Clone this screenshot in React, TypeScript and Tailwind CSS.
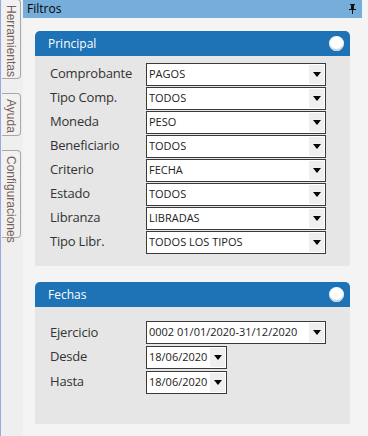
import React from 'react';

type FieldProps = {
  label: string;
  value: string;
  width?: string;
};

const principal: FieldProps[] = [
  { label: 'Comprobante', value: 'PAGOS' },
  { label: 'Tipo Comp.', value: 'TODOS' },
  { label: 'Moneda', value: 'PESO' },
  { label: 'Beneficiario', value: 'TODOS' },
  { label: 'Criterio', value: 'FECHA' },
  { label: 'Estado', value: 'TODOS' },
  { label: 'Libranza', value: 'LIBRADAS' },
  { label: 'Tipo Libr.', value: 'TODOS LOS TIPOS' },
];

function SelectBox({ value, width = 'w-[180px]' }: { value: string; width?: string }) {
  return (
    <div className={`flex h-[23px] ${width} items-stretch border border-[#3a3a3a] bg-white`}>
      <span className="flex flex-1 items-center truncate pl-[2px] font-['Open_Sans',sans-serif] text-[11px] text-[#222]">
        {value}
      </span>
      <span className="m-[1px] flex w-[15px] items-center justify-center bg-[#efefef]">
        <span className="h-0 w-0 border-x-[4px] border-t-[5px] border-x-transparent border-t-black" />
      </span>
    </div>
  );
}

function Row({ label, value, width }: FieldProps) {
  return (
    <div className="flex h-[24px] items-center">
      <span className="w-[96px] font-['Open_Sans',sans-serif] text-[13px] tracking-[-0.2px] text-[#333]">{label}</span>
      <SelectBox value={value} width={width} />
    </div>
  );
}

function Toggle() {
  return (
    <span className="h-[15px] w-[15px] rounded-full bg-white shadow-[inset_0_-2px_1px_#c9d3dc]" />
  );
}

function Card({ title, children, bodyClass }: { title: string; children: React.ReactNode; bodyClass: string }) {
  return (
    <section className="flex flex-col">
      <header className="flex h-[25px] items-center justify-between rounded-t-[5px] bg-[#1d73b6] pl-[13px] pr-[6px]">
        <span className="font-['Open_Sans',sans-serif] text-[12px] text-white">{title}</span>
        <Toggle />
      </header>
      <div className={`bg-[#e6e6e6] pl-[15px] ${bodyClass}`}>{children}</div>
    </section>
  );
}

function SideTab({ label, height }: { label: string; height: string }) {
  return (
    <div
      className={`flex ${height} w-[19px] justify-center rounded-r-[4px] border border-l-0 border-[#a8a8a8] bg-[#f1f1f1] pt-[5px]`}
    >
      <span className="font-['Liberation_Sans',sans-serif] text-[12px] leading-none text-[#7a5e58] [writing-mode:vertical-rl]">
        {label}
      </span>
    </div>
  );
}

export default function App() {
  return (
    <div className="flex h-[436px] w-[368px] bg-[#f4f4f4]">
      <aside className="flex w-[23px] flex-col gap-[14px] border-l border-[#9aa9dc] bg-[#efefef] pl-[1px]">
        <div className="-mt-[1px]">
          <SideTab label="Herramientas" height="h-[80px]" />
        </div>
        <SideTab label="Ayuda" height="h-[43px]" />
        <SideTab label="Configuraciones" height="h-[88px]" />
      </aside>

      <main className="flex w-[339px] flex-col bg-[#f4f4f4]">
        <div className="flex h-[18px] items-center justify-between bg-[#76aedb] pl-[4px] pr-[6px]">
          <span className="font-['Open_Sans',sans-serif] text-[12px] text-black">Filtros</span>
          <svg width="7" height="10" viewBox="0 0 7 10">
            <path d="M1 0h5v1H5v4h2v1H4v4H3V6H0V5h2V1H1z" fill="#111" />
          </svg>
        </div>

        <div className="flex flex-col gap-[16px] px-[12px] pt-[13px]">
          <Card title="Principal" bodyClass="h-[210px] pt-[6px]">
            {principal.map((f) => (
              <Row key={f.label} {...f} />
            ))}
          </Card>

          <Card title="Fechas" bodyClass="h-[117px] pt-[14px]">
            <div className="flex h-[23px] items-center">
              <span className="w-[96px] font-['Open_Sans',sans-serif] text-[13px] tracking-[-0.2px] text-[#333]">Ejercicio</span>
              <SelectBox value="0002 01/01/2020-31/12/2020" />
            </div>
            <div className="mt-[1px] flex h-[24px] items-center">
              <span className="w-[96px] font-['Open_Sans',sans-serif] text-[13px] tracking-[-0.2px] text-[#333]">Desde</span>
              <SelectBox value="18/06/2020" width="w-[81px]" />
            </div>
            <div className="mt-[1px] flex h-[24px] items-center">
              <span className="w-[96px] font-['Open_Sans',sans-serif] text-[13px] tracking-[-0.2px] text-[#333]">Hasta</span>
              <SelectBox value="18/06/2020" width="w-[81px]" />
            </div>
          </Card>
        </div>
      </main>
    </div>
  );
}
